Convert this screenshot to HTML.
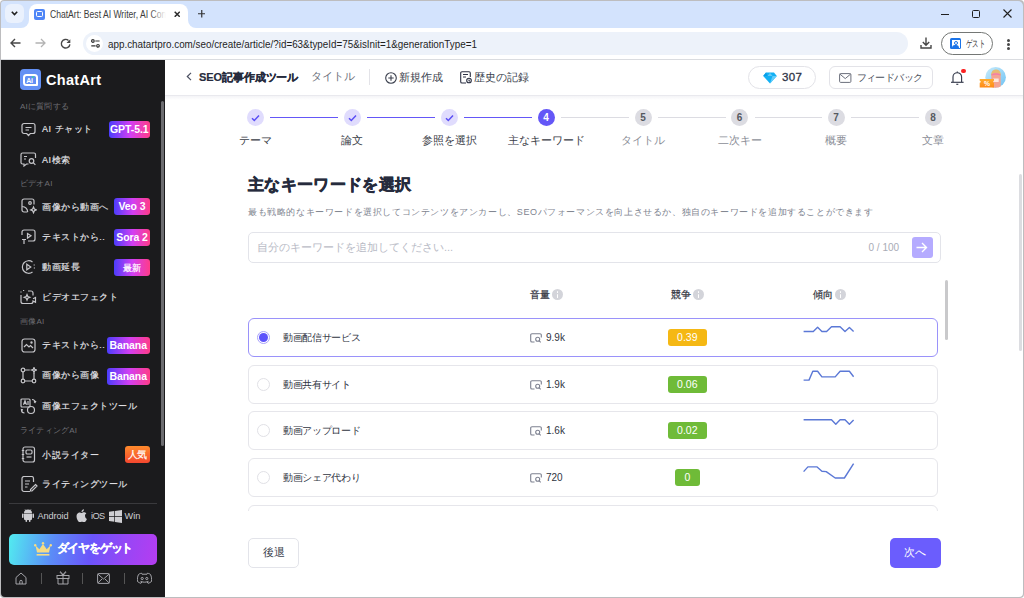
<!DOCTYPE html>
<html><head><meta charset="utf-8">
<style>
*{box-sizing:border-box;margin:0;padding:0}
html,body{width:1024px;height:598px;overflow:hidden;background:#fff;font-family:"Liberation Sans",sans-serif}
.a{position:absolute}
.t{white-space:nowrap;line-height:1}
svg{display:block}
/* browser chrome */
#win{position:absolute;left:0;top:0;width:1024px;height:598px;background:#bdbdbf;border-radius:4px}
#strip{left:1px;top:1px;width:1022px;height:27px;background:#d3e3fd;border-radius:3px 5px 0 0}
#toolbar{left:1px;top:28px;width:1022px;height:31px;background:#fff}
#tbline{left:1px;top:59px;width:1022px;height:1px;background:#dadce0}
#side{left:1px;top:60px;width:164px;height:537px;background:#1b1b1d;border-radius:0 0 0 4px}
#main{left:165px;top:60px;width:858px;height:537px;background:#fff;border-radius:0 0 4px 0}
.sl{left:20px;font-size:8px;letter-spacing:0.2px;color:#6e6e73}
.si{left:42px;font-size:9px;letter-spacing:0.55px;color:#e4e4e8;-webkit-text-stroke:0.15px #e4e4e8}
.bd{height:17px;border-radius:3px;background:linear-gradient(90deg,#4b3dfc 0%,#d23ff3 52%,#ff3c88 100%);color:#fff;font-size:10.5px;font-weight:bold;text-align:center;line-height:17px;white-space:nowrap;letter-spacing:-0.1px}
.st{width:17px;height:17px;border-radius:50%;font-size:10px;font-weight:bold;text-align:center;line-height:17px}
.lb{top:134.5px;width:120px;text-align:center;font-size:11px}
.th{font-size:10px;color:#30333d;-webkit-text-stroke:0.22px #30333d}
.info{top:289px;width:11px;height:11px;border-radius:50%;background:#d3d4da;color:transparent;font-size:1px}
.info::before{content:"";position:absolute;left:4.8px;top:2.2px;width:1.5px;height:1.5px;background:#fff;border-radius:50%}
.info::after{content:"";position:absolute;left:4.8px;top:4.6px;width:1.5px;height:4.2px;background:#fff;border-radius:1px}
.rn{font-size:10px;letter-spacing:-0.35px;color:#30343f}
.vn{font-size:10px;color:#30343f}
.cb{height:16.5px;border-radius:3px;color:#fff;font-size:10.5px;text-align:center;line-height:16.5px}
</style></head>
<body>
<div id="win"></div>
<div id="strip" class="a"></div>
<!-- tab list button -->
<!-- tab -->
<div class="a" style="left:29px;top:4px;width:159px;height:24px;background:#fff;border-radius:8px 8px 0 0"></div>
<div class="a" style="left:21px;top:20px;width:8px;height:8px;background:#fff"></div>
<div class="a" style="left:21px;top:20px;width:8px;height:8px;background:#d3e3fd;border-radius:0 0 8px 0"></div>
<div class="a" style="left:188px;top:20px;width:8px;height:8px;background:#fff"></div>
<div class="a" style="left:188px;top:20px;width:8px;height:8px;background:#d3e3fd;border-radius:0 0 0 8px"></div>
<div class="a" style="left:5px;top:4px;width:19px;height:19px;border-radius:6px;background:#eaf1fd"></div>
<svg class="a" style="left:11px;top:11px" width="7" height="5" viewBox="0 0 7 5"><path d="M.8 .8l2.700 2.700L6.200 .8" fill="none" stroke="#1f1f1f" stroke-width="1.6"/></svg>
<div class="a" style="left:34px;top:9px;width:11px;height:11px;background:#4f86f7;border-radius:2px"></div>
<div class="a" style="left:36px;top:11px;width:7px;height:6px;border:1px solid #fff;border-radius:1.5px"></div>
<div class="a" style="left:50px;top:6px;width:118px;height:18px;overflow:hidden"><div class="a t" style="left:0;top:3px;font-size:11px;color:#3c3c3c;transform:scaleX(0.78);transform-origin:0 0">ChatArt: Best AI Writer, AI Content</div></div>
<div class="a" style="left:150px;top:6px;width:20px;height:18px;background:linear-gradient(90deg,rgba(255,255,255,0),#fff 80%)"></div>
<svg class="a" style="left:173.500px;top:10.800px" width="6.500" height="6.500" viewBox="0 0 6.500 6.500"><path d="M.7 .7l5.100 5.100M5.800 .7L.7 5.800" stroke="#2a2a2a" stroke-width="1.5"/></svg>
<svg class="a" style="left:197.700px;top:10px" width="7.500" height="7.500" viewBox="0 0 7.500 7.500"><path d="M3.750 0v7.500M0 3.750h7.500" stroke="#333" stroke-width="1.2"/></svg>
<!-- window controls -->
<div class="a" style="left:941px;top:14px;width:8px;height:1px;background:#1f1f1f"></div>
<div class="a" style="left:972px;top:10px;width:8px;height:8px;border:1.2px solid #1f1f1f;border-radius:1.5px"></div>
<svg class="a" style="left:1003px;top:9px" width="9" height="9" viewBox="0 0 9 9"><path d="M0.5 0.5l8 8M8.5 0.5l-8 8" stroke="#1f1f1f" stroke-width="1.1"/></svg>

<div id="toolbar" class="a"></div>
<div id="tbline" class="a"></div>
<!-- nav -->
<svg class="a" style="left:10px;top:38px" width="11" height="10" viewBox="0 0 11 10"><path d="M10.5 5H1.2M5 1L1 5l4 4" fill="none" stroke="#474747" stroke-width="1.4"/></svg>
<svg class="a" style="left:35px;top:38px" width="11" height="10" viewBox="0 0 11 10"><path d="M0.5 5h9.3M6 1l4 4-4 4" fill="none" stroke="#b3b3b3" stroke-width="1.3"/></svg>
<svg class="a" style="left:60px;top:38px" width="12" height="12" viewBox="0 0 12 12"><path d="M9.900 6.300A4.300 4.300 0 1 1 8.500 2.500" fill="none" stroke="#474747" stroke-width="1.4"/><path d="M10.300 1.200V5H6.500z" fill="#474747"/></svg>
<!-- address bar -->
<div class="a" style="left:83px;top:32px;width:825px;height:23px;background:#edf2fa;border-radius:12px"></div>
<div class="a" style="left:86px;top:35px;width:17px;height:17px;background:#fff;border-radius:50%"></div>
<svg class="a" style="left:90.500px;top:39.300px" width="9" height="9" viewBox="0 0 9 9"><circle cx="1.900" cy="2" r="1.300" fill="none" stroke="#333" stroke-width="1.2"/><path d="M4.300 2h4.300M.3 6.800h4.300" stroke="#333" stroke-width="1.2"/><circle cx="7" cy="6.800" r="1.300" fill="none" stroke="#333" stroke-width="1.2"/></svg>
<div class="a t" style="left:108px;top:38.5px;font-size:11.2px;color:#1f1f1f;transform:scaleX(0.88);transform-origin:0 0">app.chatartpro.com<span style="color:#1f1f1f">/seo/create/article/?id=63&amp;typeId=75&amp;isInit=1&amp;generationType=1</span></div>
<!-- download -->
<svg class="a" style="left:920px;top:37px" width="12" height="12" viewBox="0 0 12 12"><path d="M6 0.5v7.5M2.8 5L6 8.2 9.2 5" fill="none" stroke="#474747" stroke-width="1.4"/><path d="M1 8v3h10V8" fill="none" stroke="#474747" stroke-width="1.4"/></svg>
<div class="a" style="left:941px;top:32px;width:52px;height:23px;border:1px solid #747775;border-radius:12px"></div>
<div class="a" style="left:950px;top:38px;width:11px;height:11px;background:#1a73e8;border-radius:1.5px"></div>
<div class="a" style="left:951.5px;top:39.5px;width:8px;height:8px;background:#fff"></div>
<div class="a" style="left:953.5px;top:40.5px;width:4px;height:4px;border:1px solid #1a73e8;border-radius:50%"></div>
<div class="a" style="left:952px;top:45px;width:7px;height:3px;background:#1a73e8;border-radius:3px 3px 0 0"></div>
<div class="a t" style="left:966px;top:38.5px;font-size:10px;color:#3c3c3c;transform:scaleX(0.64);transform-origin:0 0">ゲスト</div>
<div class="a" style="left:1006.5px;top:38.5px;width:3px;height:3px;background:#474747;border-radius:50%"></div>
<div class="a" style="left:1006.5px;top:42.5px;width:3px;height:3px;background:#474747;border-radius:50%"></div>
<div class="a" style="left:1006.5px;top:46.5px;width:3px;height:3px;background:#474747;border-radius:50%"></div>

<div id="side" class="a"></div>

<!-- SIDEBAR -->
<div class="a" style="left:20px;top:69px;width:21px;height:21px;background:#6390f4;border-radius:4px"></div>
<div class="a" style="left:22.700px;top:73.700px;width:15.300px;height:12.500px;border:2px solid #fff;border-radius:3.500px 3.500px 1px 3.500px"></div>
<div class="a t" style="left:26.300px;top:76.800px;font-size:7px;font-weight:bold;color:#fff;letter-spacing:-0.3px">Ai</div>
<div class="a" style="left:32.300px;top:76.300px;width:2px;height:2px;background:#3fd19b;border-radius:50%"></div>
<div class="a t" style="left:46px;top:73px;font-size:14.5px;font-weight:bold;color:#fff;letter-spacing:0.3px">ChatArt</div>

<div class="a t sl" style="top:102.5px">AIに質問する</div>
<div class="a t si" style="top:125px">AI チャット</div>
<div class="a bd" style="left:108.5px;top:121px;width:41.5px">GPT-5.1</div>
<div class="a t si" style="top:156px">AI検索</div>
<div class="a t sl" style="top:179.5px">ビデオAI</div>
<div class="a t si" style="top:202.5px">画像から動画へ</div>
<div class="a bd" style="left:114px;top:198px;width:36px">Veo 3</div>
<div class="a t si" style="top:232.5px">テキストから..</div>
<div class="a bd" style="left:114px;top:228.5px;width:36px">Sora 2</div>
<div class="a t si" style="top:263px">動画延長</div>
<div class="a bd" style="left:114px;top:259px;width:36px;font-size:9px;letter-spacing:0.2px;font-weight:normal;-webkit-text-stroke:0.2px #fff;line-height:18px">最新</div>
<div class="a t si" style="top:293px">ビデオエフェクト</div>
<div class="a t sl" style="top:318px">画像AI</div>
<div class="a t si" style="top:340.5px">テキストから..</div>
<div class="a bd" style="left:106.5px;top:337px;width:43.5px">Banana</div>
<div class="a t si" style="top:371px">画像から画像</div>
<div class="a bd" style="left:106.5px;top:367.5px;width:43.5px">Banana</div>
<div class="a t si" style="top:401.5px">画像エフェクトツール</div>
<div class="a t sl" style="top:427px">ライティングAI</div>
<div class="a t si" style="top:450.5px">小説ライター</div>
<div class="a bd" style="left:125px;top:446px;width:25px;background:linear-gradient(180deg,#ff8b2c,#f4472f);font-size:10px;font-weight:normal;letter-spacing:-0.3px;-webkit-text-stroke:0.2px #fff">人気</div>
<div class="a t si" style="top:479.5px">ライティングツール</div>
<div class="a" style="left:9px;top:503px;width:148px;height:1px;background:#3a3a3d"></div>

<!-- sidebar icons -->
<svg class="a" style="left:21px;top:122px" width="15" height="15" viewBox="0 0 15 15" fill="none" stroke="#c6c6ca" stroke-width="1.2"><path d="M3 1.5h9a2 2 0 0 1 2 2v6a2 2 0 0 1-2 2H9.3L7.5 13.5 5.7 11.5H3a2 2 0 0 1-2-2v-6a2 2 0 0 1 2-2z"/><path d="M4.5 5.5h6M4.5 8h3.5"/></svg>
<svg class="a" style="left:20px;top:152px" width="17" height="15" viewBox="0 0 17 15" fill="none" stroke="#c6c6ca" stroke-width="1.2"><path d="M15.5 6V2.5a1.5 1.5 0 0 0-1.5-1.5H2.5A1.5 1.5 0 0 0 1 2.5v8A1.5 1.5 0 0 0 2.5 12h1.5l0 2 2.5-2h2"/><path d="M4 4.5h3M4 7h2"/><circle cx="11.5" cy="9" r="2.3"/><path d="M13.2 10.7l2.2 2.2"/></svg>
<svg class="a" style="left:21px;top:198px" width="16" height="16" viewBox="0 0 16 16" fill="none" stroke="#c6c6ca" stroke-width="1.2"><path d="M6.5 14H3a2 2 0 0 1-2-2V3a2 2 0 0 1 2-2h8a2 2 0 0 1 2 2v3.5"/><path d="M1.2 8.5a6 6 0 0 1 5.5 5.5"/><circle cx="9" cy="5" r="1.3"/><path d="M12.5 9l.9 2 2 .9-2 .9-.9 2-.9-2-2-.9 2-.9z"/></svg>
<svg class="a" style="left:21px;top:229px" width="15" height="16" viewBox="0 0 15 16" fill="none" stroke="#c6c6ca" stroke-width="1.2"><path d="M1 6V3a2 2 0 0 1 2-2h9a2 2 0 0 1 2 2v7a2 2 0 0 1-2 2H7"/><path d="M6.5 4.5l3.5 2.3-3.5 2.3z"/><path d="M1 10.5h4M3 10.5V15"/></svg>
<svg class="a" style="left:21px;top:259px" width="15" height="16" viewBox="0 0 15 16" fill="none" stroke="#c6c6ca" stroke-width="1.2"><path d="M11.5 3A6.3 6.3 0 1 0 11.5 13"/><path d="M13.2 5.5v1M13.4 8.5v1"/><path d="M5.8 5.2l4 2.8-4 2.8z"/></svg>
<svg class="a" style="left:20px;top:289px" width="17" height="16" viewBox="0 0 17 16" fill="none" stroke="#c6c6ca" stroke-width="1.2"><path d="M1 6v6.5a2 2 0 0 0 2 2h8a2 2 0 0 0 2-2V12l2.5 1.3V8.5L13 9.8"/><path d="M13 6.5V4a2 2 0 0 0-2-2H8"/><path d="M1 3.5V2.5M3 1.5H4.2"/><path d="M7 5.5l.8 2 2 .8-2 .8-.8 2-.8-2-2-.8 2-.8z"/></svg>
<svg class="a" style="left:21px;top:338px" width="15" height="15" viewBox="0 0 15 15" fill="none" stroke="#c6c6ca" stroke-width="1.2"><rect x="1" y="1" width="13" height="13" rx="2.5"/><path d="M3 9l2.5-2.5 2.5 2.5 1.5-1.5 2.5 2.5"/><circle cx="10.5" cy="4.5" r="0.6"/></svg>
<svg class="a" style="left:20px;top:367px" width="17" height="17" viewBox="0 0 17 17" fill="none" stroke="#c6c6ca" stroke-width="1.2"><circle cx="3" cy="3" r="1.8"/><circle cx="3" cy="14" r="1.8"/><circle cx="14" cy="14" r="1.8"/><path d="M3 4.8v7.4M4.8 14h7.4M4.8 3h5M14 6v6.2"/><path d="M14 .5l.7 1.8 1.8.7-1.8.7-.7 1.8-.7-1.8-1.8-.7 1.8-.7z"/></svg>
<svg class="a" style="left:20px;top:398px" width="17" height="17" viewBox="0 0 17 17" fill="none" stroke="#c6c6ca" stroke-width="1.2"><rect x="1" y="1" width="9" height="8" rx="1"/><path d="M3.5 6.8l1.5-4 1.5 4M4 5.5h2M8 3v4"/><circle cx="11" cy="12" r="3.5"/><path d="M12 1.5a3 3 0 0 1 3 3M14 3.5l1 1 1-1.5"/><path d="M1.5 12a3 3 0 0 0 3 3M2 13l-.5-1.5 1.5 .3"/></svg>
<svg class="a" style="left:21px;top:446px" width="15" height="17" viewBox="0 0 15 17" fill="none" stroke="#c6c6ca" stroke-width="1.2"><rect x="2" y="1" width="11.5" height="15" rx="2"/><path d="M.8 4.5h2.4M.8 8.5h2.4M.8 12.5h2.4"/><rect x="5" y="4" width="6" height="4" rx="1.2"/><path d="M5.5 11h5"/></svg>
<svg class="a" style="left:21px;top:476px" width="17" height="17" viewBox="0 0 17 17" fill="none" stroke="#c6c6ca" stroke-width="1.2"><path d="M9 15.5H3a2 2 0 0 1-2-2v-11a2 2 0 0 1 2-2h7.5a2 2 0 0 1 2 2V6"/><path d="M4 5h5M4 8h4M4 11h2.5"/><path d="M14.5 8.5l1.5 1.5-5 5H9.5v-1.5z"/></svg>

<!-- platforms -->
<svg class="a" style="left:22px;top:509px" width="12" height="13" viewBox="0 0 12 13" fill="#cfcfd3"><path d="M2 4.5h8v5.5a1 1 0 0 1-1 1H3a1 1 0 0 1-1-1z"/><path d="M2 4A4 3.5 0 0 1 10 4z"/><rect x="0" y="4.5" width="1.5" height="4.5" rx=".75"/><rect x="10.5" y="4.5" width="1.5" height="4.5" rx=".75"/><rect x="3.5" y="10" width="1.6" height="3" rx=".8"/><rect x="6.9" y="10" width="1.6" height="3" rx=".8"/><path d="M3 .3l1.2 1.8M9 .3L7.8 2.1" stroke="#cfcfd3" stroke-width=".7"/></svg>
<div class="a t" style="left:37.5px;top:511.5px;font-size:9.2px;color:#cfcfd3;letter-spacing:-0.1px">Android</div>
<svg class="a" style="left:76px;top:509px" width="11" height="13" viewBox="0 0 11 13" fill="#cfcfd3"><path d="M9 6.8c0-1.5 1.2-2.2 1.3-2.3-.7-1-1.8-1.2-2.2-1.2-.9-.1-1.8.6-2.3.6s-1.2-.5-2-.5C2.700 3.400 1.700 4 1.100 5c-1.200 2-.3 5 .8 6.700.6.800 1.200 1.700 2 1.600.8 0 1.100-.5 2.100-.5s1.200.5 2.100.5c.9 0 1.400-.8 1.900-1.600.6-.9.9-1.800.9-1.800S9 9.400 9 6.800z"/><path d="M7.3 2.200c.4-.5.700-1.200.600-1.900-.6 0-1.300.4-1.800.9-.4.400-.7 1.100-.6 1.800.7.100 1.400-.3 1.800-.8z"/></svg>
<div class="a t" style="left:91px;top:511.5px;font-size:9.2px;color:#cfcfd3;letter-spacing:-0.6px">iOS</div>
<svg class="a" style="left:109px;top:509.5px" width="13" height="13" viewBox="0 0 13 13" fill="#cfcfd3"><path d="M0 1.8l5.3-.7v5H0zM6 1l7-1v6.1H6zM0 6.8h5.3v5L0 11.1zM6 6.8h7V13l-7-1z"/></svg>
<div class="a t" style="left:124.5px;top:511.5px;font-size:9.2px;color:#cfcfd3">Win</div>

<!-- get diamonds button -->
<div class="a" style="left:9px;top:534px;width:148px;height:30.5px;border-radius:5px;background:linear-gradient(100deg,#52ecf0 0%,#5b8cf7 30%,#6a55fb 55%,#9b45f5 80%,#b53df0 100%)"></div>
<svg class="a" style="left:34px;top:542px" width="18" height="14" viewBox="0 0 18 14"><path d="M1.5 3.5l3.8 3.8L9 2l3.7 5.3 3.800-3.800-1.500 7H3z" fill="#f6dc85"/><circle cx="1.2" cy="3.2" r="1.2" fill="#f6dc85"/><circle cx="9" cy="1.2" r="1.2" fill="#f6dc85"/><circle cx="16.8" cy="3.2" r="1.2" fill="#f6dc85"/><rect x="2.6" y="12" width="12.8" height="1.6" fill="#f6dc85"/></svg>
<div class="a t" style="left:56.5px;top:541.5px;font-size:12px;font-weight:bold;color:#fff;letter-spacing:-1.2px;-webkit-text-stroke:0.15px #fff">ダイヤをゲット</div>

<!-- footer icons -->
<svg class="a" style="left:15px;top:572px" width="12" height="13" viewBox="0 0 12 13" fill="none" stroke="#ababb0" stroke-width="0.95"><path d="M1 5.5L6 1l5 4.5V12H1z"/><path d="M4.8 12V9.5a1.2 1.2 0 0 1 2.4 0V12"/></svg>
<div class="a" style="left:41px;top:573px;width:1px;height:11px;background:#555"></div>
<svg class="a" style="left:56px;top:571px" width="14" height="14" viewBox="0 0 14 14" fill="none" stroke="#ababb0" stroke-width="0.95"><rect x="1" y="4.5" width="12" height="3"/><path d="M2 7.5V13h10V7.5M7 4.5V13"/><path d="M7 4.5C5.500 2 3.800 1.800 4 1s2 .5 3 3.500c1-3 2.800-4.300 3-3.500S8.500 2 7 4.500"/></svg>
<div class="a" style="left:82px;top:573px;width:1px;height:11px;background:#555"></div>
<svg class="a" style="left:97px;top:573px" width="13" height="11" viewBox="0 0 13 11" fill="none" stroke="#ababb0" stroke-width="0.95"><rect x=".6" y=".6" width="11.8" height="9.8" rx="1"/><path d="M.8 1l5.700 5 5.700-5M.8 10l4.200-4M12.200 10L8 6"/></svg>
<div class="a" style="left:124px;top:573px;width:1px;height:11px;background:#555"></div>
<svg class="a" style="left:137px;top:572px" width="15" height="12" viewBox="0 0 15 12" fill="none" stroke="#ababb0" stroke-width="0.95"><path d="M4.500 1.200C3 1.500 2 2 1.500 2.500.5 4.500.2 7 .5 9.500 1.500 10.500 3 11 4 11.300l1-1.600M10.500 1.200c1.500.3 2.500.8 3 1.300 1 2 1.300 4.500 1 7-1 1-2.500 1.500-3.500 1.800l-1-1.600"/><path d="M4.500 1.200L5 2.200h5l.5-1"/><path d="M3.500 9.300C6 10.500 9 10.500 11.500 9.300"/><circle cx="5.200" cy="6.500" r="1.100"/><circle cx="9.800" cy="6.500" r="1.100"/></svg>
<!-- sidebar scrollbar -->
<div class="a" style="left:161px;top:101px;width:3px;height:345px;background:#6c6c70;border-radius:2px"></div>

<div id="main" class="a"></div>

<!-- HEADER -->
<div class="a" style="left:165px;top:95px;width:858px;height:1px;background:#e9e9ee"></div>
<div class="a" style="left:165px;top:96px;width:858px;height:4px;background:linear-gradient(180deg,#f4f4f7,#fff)"></div>
<svg class="a" style="left:186px;top:72px" width="6" height="9" viewBox="0 0 6 9"><path d="M5 .8L1.3 4.5 5 8.2" fill="none" stroke="#4a4f60" stroke-width="1.2"/></svg>
<div class="a t" style="left:199px;top:72px;font-size:11px;font-weight:bold;color:#262b3d;letter-spacing:-0.1px;-webkit-text-stroke:0.2px #262b3d">SEO記事作成ツール</div>
<div class="a t" style="left:311px;top:70.5px;font-size:11px;color:#6b6f7b">タイトル</div>
<div class="a" style="left:368.5px;top:69px;width:1px;height:16px;background:#e3e3e8"></div>
<svg class="a" style="left:385px;top:71.500px" width="12" height="12" viewBox="0 0 12 12" fill="none" stroke="#3a3f4d" stroke-width="1.1"><circle cx="6" cy="6" r="5.300"/><path d="M6 3.300v5.400M3.300 6h5.400"/></svg>
<div class="a t" style="left:398.5px;top:71.500px;font-size:10.700px;color:#3a3f4d">新規作成</div>
<svg class="a" style="left:460px;top:71px" width="12" height="13" viewBox="0 0 12 13" fill="none" stroke="#2c3144" stroke-width="1.1"><path d="M6 12H2a1.3 1.3 0 0 1-1.300-1.300V2A1.300 1.300 0 0 1 2 .7h7A1.300 1.300 0 0 1 10.300 2v4"/><path d="M3 3.500h5M3 6h3"/><circle cx="9" cy="9.500" r="2.300"/><path d="M9 8.500v1.200l.8.5"/></svg>
<div class="a t" style="left:473.500px;top:71.500px;font-size:11px;color:#3a3f4d;letter-spacing:0.15px">歴史の記録</div>

<div class="a" style="left:748px;top:66px;width:67.5px;height:23px;border:1px solid #e3e3e8;border-radius:12px"></div>
<svg class="a" style="left:762.500px;top:71.500px" width="14" height="12" viewBox="0 0 14 12"><path d="M3 .5h8l2.800 3.500L7 11.500 .2 4z" fill="#12b0f4"/><path d="M9.500 4h4.300L7 11.500z" fill="#63cdfb"/><path d="M4.500 4L7 .8 9.500 4z" fill="#5fcaf9"/><path d="M.2 4L3 .5 4.500 4z" fill="#0a9de6"/></svg>
<div class="a t" style="left:782px;top:72px;font-size:11.5px;color:#2e3346;-webkit-text-stroke:0.3px #2e3346;letter-spacing:0.3px">307</div>
<div class="a" style="left:829px;top:66px;width:103.500px;height:23px;border:1px solid #e3e3e8;border-radius:6px"></div>
<svg class="a" style="left:839px;top:73px" width="12.500" height="10" viewBox="0 0 12.500 10" fill="none" stroke="#6b6f7b" stroke-width="1"><rect x=".6" y=".6" width="11.300" height="8.800" rx="1"/><path d="M.8 1l5.450 4.600L11.700 1"/></svg>
<div class="a t" style="left:856.500px;top:72.500px;font-size:10px;color:#4a4f5c;letter-spacing:-0.6px">フィードバック</div>
<svg class="a" style="left:950px;top:70px" width="15" height="16" viewBox="0 0 15 16" fill="none" stroke="#363b4c" stroke-width="1.15"><path d="M3 12V7a4.300 4.300 0 0 1 8.600 0v5"/><path d="M1 12.300h12.600"/><path d="M6.300 14.300h2"/><path d="M7.300 1.500v1.300"/></svg>
<div class="a" style="left:961px;top:68.8px;width:4.700px;height:4.700px;background:#fb2222;border-radius:50%"></div>
<svg class="a" style="left:979px;top:67px" width="28" height="21" viewBox="0 0 28 21">
<defs><linearGradient id="av" x1="0" y1="0" x2="1" y2="1"><stop offset="0" stop-color="#c9ecfd"/><stop offset="1" stop-color="#6fc3f3"/></linearGradient>
<linearGradient id="tk" x1="0" y1="0" x2="0" y2="1"><stop offset="0" stop-color="#ffad2e"/><stop offset="1" stop-color="#ff8a18"/></linearGradient></defs>
<circle cx="16.600" cy="10.300" r="10.300" fill="url(#av)"/>
<path d="M12.300 20V10.500C12.300 6.500 14 4.500 17 4.500S21.700 6.500 21.700 10.500V19.500C19 21 15 21 12.300 20z" fill="#f4a493"/>
<path d="M12 9C12 4.500 14 2.500 17 2.500S22 4.500 22 9L21 8C20 6 19 5.800 17 5.800S13.500 6 13 8z" fill="#e7bb73"/>
<path d="M12.500 7.300C15 6 19 6 21.500 7.300L21.400 8.600C19 7.500 15 7.500 12.600 8.600z" fill="#f27fa5"/>
<path d="M14.300 11.500h5.400v3.500h-5.400z" fill="#fde6de"/>
<path d="M.7 12h14.300v1.800a1 1 0 0 0 0 2v4.800H.7v-4.800a1 1 0 0 0 0-2z" fill="url(#tk)"/>
<text x="7.900" y="19.200" font-family="Liberation Sans" font-size="6.800" font-weight="bold" fill="#fff" text-anchor="middle">%</text>
</svg>

<!-- <div class="a" style="left:270px;top:116.5px;width:68px;height:1.6px;background:#6457f7"></div>
<div class="a" style="left:367px;top:116.5px;width:68px;height:1.6px;background:#6457f7"></div>
<div class="a" style="left:464px;top:116.5px;width:68px;height:1.6px;background:#6457f7"></div>
<div class="a" style="left:561px;top:116.5px;width:68px;height:1.6px;background:#dcdce2"></div>
<div class="a" style="left:658px;top:116.5px;width:67.5px;height:1.6px;background:#dcdce2"></div>
<div class="a" style="left:754.5px;top:116.5px;width:67.5px;height:1.6px;background:#dcdce2"></div>
<div class="a" style="left:851px;top:116.5px;width:68px;height:1.6px;background:#dcdce2"></div>
<div class="a" style="left:246.5px;top:109px;width:17px;height:17px;border-radius:50%;background:#e0dcfd"></div>
<svg class="a" style="left:250.5px;top:113.5px" width="9" height="8" viewBox="0 0 9 8"><path d="M1 4.200l2.300 2.300L8 1.500" fill="none" stroke="#5a4ef5" stroke-width="1.5"/></svg>
<div class="a" style="left:343.5px;top:109px;width:17px;height:17px;border-radius:50%;background:#e0dcfd"></div>
<svg class="a" style="left:347.5px;top:113.5px" width="9" height="8" viewBox="0 0 9 8"><path d="M1 4.200l2.300 2.300L8 1.500" fill="none" stroke="#5a4ef5" stroke-width="1.5"/></svg>
<div class="a" style="left:440.5px;top:109px;width:17px;height:17px;border-radius:50%;background:#e0dcfd"></div>
<svg class="a" style="left:444.5px;top:113.5px" width="9" height="8" viewBox="0 0 9 8"><path d="M1 4.200l2.300 2.300L8 1.500" fill="none" stroke="#5a4ef5" stroke-width="1.5"/></svg>
<div class="a st" style="left:537.5px;top:109px;background:#6457f7;color:#fff">4</div>
<div class="a st" style="left:634.5px;top:109px;background:#dcdce2;color:#55585f">5</div>
<div class="a st" style="left:731.0px;top:109px;background:#dcdce2;color:#55585f">6</div>
<div class="a st" style="left:827.5px;top:109px;background:#dcdce2;color:#55585f">7</div>
<div class="a st" style="left:924.5px;top:109px;background:#dcdce2;color:#55585f">8</div>
<div class="a t lb" style="left:195px;color:#3a3d47">テーマ</div>
<div class="a t lb" style="left:292px;color:#3a3d47">論文</div>
<div class="a t lb" style="left:389px;color:#3a3d47">参照を選択</div>
<div class="a t lb" style="left:486px;color:#3a3d47">主なキーワード</div>
<div class="a t lb" style="left:583px;color:#8b8e97">タイトル</div>
<div class="a t lb" style="left:679.5px;color:#8b8e97">二次キー</div>
<div class="a t lb" style="left:776px;color:#8b8e97">概要</div>
<div class="a t lb" style="left:873px;color:#8b8e97">文章</div>
 -->
<div class="a" style="left:270px;top:116.5px;width:68px;height:1.6px;background:#6457f7"></div>
<div class="a" style="left:367px;top:116.5px;width:68px;height:1.6px;background:#6457f7"></div>
<div class="a" style="left:464px;top:116.5px;width:68px;height:1.6px;background:#6457f7"></div>
<div class="a" style="left:561px;top:116.5px;width:68px;height:1.6px;background:#dcdce2"></div>
<div class="a" style="left:658px;top:116.5px;width:67.5px;height:1.6px;background:#dcdce2"></div>
<div class="a" style="left:754.5px;top:116.5px;width:67.5px;height:1.6px;background:#dcdce2"></div>
<div class="a" style="left:851px;top:116.5px;width:68px;height:1.6px;background:#dcdce2"></div>
<div class="a" style="left:246.5px;top:109px;width:17px;height:17px;border-radius:50%;background:#e0dcfd"></div>
<svg class="a" style="left:250.5px;top:113.5px" width="9" height="8" viewBox="0 0 9 8"><path d="M1 4.200l2.300 2.300L8 1.500" fill="none" stroke="#5a4ef5" stroke-width="1.5"/></svg>
<div class="a" style="left:343.5px;top:109px;width:17px;height:17px;border-radius:50%;background:#e0dcfd"></div>
<svg class="a" style="left:347.5px;top:113.5px" width="9" height="8" viewBox="0 0 9 8"><path d="M1 4.200l2.300 2.300L8 1.500" fill="none" stroke="#5a4ef5" stroke-width="1.5"/></svg>
<div class="a" style="left:440.5px;top:109px;width:17px;height:17px;border-radius:50%;background:#e0dcfd"></div>
<svg class="a" style="left:444.5px;top:113.5px" width="9" height="8" viewBox="0 0 9 8"><path d="M1 4.200l2.300 2.300L8 1.500" fill="none" stroke="#5a4ef5" stroke-width="1.5"/></svg>
<div class="a st" style="left:537.5px;top:109px;background:#6457f7;color:#fff">4</div>
<div class="a st" style="left:634.5px;top:109px;background:#dcdce2;color:#55585f">5</div>
<div class="a st" style="left:731.0px;top:109px;background:#dcdce2;color:#55585f">6</div>
<div class="a st" style="left:827.5px;top:109px;background:#dcdce2;color:#55585f">7</div>
<div class="a st" style="left:924.5px;top:109px;background:#dcdce2;color:#55585f">8</div>
<div class="a t lb" style="left:195px;color:#3a3d47">テーマ</div>
<div class="a t lb" style="left:292px;color:#3a3d47">論文</div>
<div class="a t lb" style="left:389px;color:#3a3d47">参照を選択</div>
<div class="a t lb" style="left:486px;color:#3a3d47">主なキーワード</div>
<div class="a t lb" style="left:583px;color:#8b8e97">タイトル</div>
<div class="a t lb" style="left:679.5px;color:#8b8e97">二次キー</div>
<div class="a t lb" style="left:776px;color:#8b8e97">概要</div>
<div class="a t lb" style="left:873px;color:#8b8e97">文章</div>


<!-- HEADING -->
<div class="a t" style="left:248px;top:177px;font-size:16px;font-weight:bold;color:#262b3d;letter-spacing:0.35px;-webkit-text-stroke:0.6px #262b3d">主なキーワードを選択</div>
<div class="a t" style="left:248px;top:207.5px;font-size:9px;letter-spacing:0.6px;color:#80848f">最も戦略的なキーワードを選択してコンテンツをアンカーし、SEOパフォーマンスを向上させるか、独自のキーワードを追加することができます</div>
<!-- input -->
<div class="a" style="left:248px;top:232px;width:693px;height:31px;border:1px solid #e3e4ea;border-radius:5px"></div>
<div class="a t" style="left:257px;top:242px;font-size:11px;color:#b9bbc6">自分のキーワードを追加してください...</div>
<div class="a t" style="left:868.5px;top:242.5px;font-size:10px;color:#a9acb6">0 / 100</div>
<div class="a" style="left:912px;top:237px;width:20.5px;height:20.5px;background:#b5abff;border-radius:3px"></div>
<svg class="a" style="left:916px;top:241.5px" width="12" height="11" viewBox="0 0 12 11" fill="none" stroke="#fff" stroke-width="1.4"><path d="M.5 5.500h10M6 1l4.500 4.500L6 10"/></svg>

<!-- TABLE HEADER -->
<div class="a t th" style="left:529.5px;top:290px">音量</div>
<div class="a info" style="left:552px;top:289px"></div>
<div class="a t th" style="left:671px;top:290px">競争</div>
<div class="a info" style="left:693px;top:289px"></div>
<div class="a t th" style="left:812.5px;top:290px">傾向</div>
<div class="a info" style="left:835px;top:289px"></div>

<!-- <div class="a" style="left:83px;top:46px;width:690px;height:38.5px;border:1px solid #9a92fa;border-radius:6px"></div>
<div class="a" style="left:92px;top:58.5px;width:13px;height:13px;border-radius:50%;border:1.3px solid #aaa3fc;background:#fff"></div>
<div class="a" style="left:94px;top:60.5px;width:9px;height:9px;border-radius:50%;background:#5d53fb"></div>
<div class="a t rn" style="left:118px;top:61.0px">動画配信サービス</div>
<svg class="a" style="left:364.5px;top:61px" width="12" height="10" viewBox="0 0 12 10" fill="none" stroke="#7d8190" stroke-width="1.1"><path d="M4.500 9H2A1.300 1.300 0 0 1 .7 7.700V2A1.300 1.300 0 0 1 2 .7h8A1.300 1.300 0 0 1 11.300 2v2.500"/><circle cx="7.700" cy="6.300" r="2"/><path d="M9.200 7.800l1.500 1.500"/></svg>
<div class="a t vn" style="left:381px;top:60.5px">9.9k</div>
<div class="a cb" style="left:502.79999999999995px;top:57px;width:39px;background:#f5b814">0.39</div>
<svg class="a" style="left:0;top:0" width="858" height="239"><path d="M638.6 59.5 L648.3 59.5 L652.6 55.2 L656.9 59.5 L661.6 59.5 L666.5 54.8 L675.1 54.8 L680.0 59.5 L684.4 55.5 L688.6 59.5" fill="none" stroke="#5b78d6" stroke-width="1.4" stroke-linejoin="round"/></svg>
<div class="a" style="left:83px;top:93px;width:690px;height:38.5px;border:1px solid #e6e6eb;border-radius:6px"></div>
<div class="a" style="left:92px;top:105.5px;width:13px;height:13px;border-radius:50%;border:1px solid #e1e1e6;background:#fff"></div>
<div class="a t rn" style="left:118px;top:108.0px">動画共有サイト</div>
<svg class="a" style="left:364.5px;top:108px" width="12" height="10" viewBox="0 0 12 10" fill="none" stroke="#7d8190" stroke-width="1.1"><path d="M4.500 9H2A1.300 1.300 0 0 1 .7 7.700V2A1.300 1.300 0 0 1 2 .7h8A1.300 1.300 0 0 1 11.300 2v2.500"/><circle cx="7.700" cy="6.300" r="2"/><path d="M9.200 7.800l1.500 1.500"/></svg>
<div class="a t vn" style="left:381px;top:107.5px">1.9k</div>
<div class="a cb" style="left:502.79999999999995px;top:104px;width:39px;background:#6fbb38">0.06</div>
<svg class="a" style="left:0;top:0" width="858" height="239"><path d="M638.6 108.1 L644.0 108.1 L647.8 99.3 L652.6 99.3 L656.9 104.9 L670.2 104.9 L675.1 99.3 L684.4 99.3 L688.6 104.7" fill="none" stroke="#5b78d6" stroke-width="1.4" stroke-linejoin="round"/></svg>
<div class="a" style="left:83px;top:140px;width:690px;height:38.5px;border:1px solid #e6e6eb;border-radius:6px"></div>
<div class="a" style="left:92px;top:152.5px;width:13px;height:13px;border-radius:50%;border:1px solid #e1e1e6;background:#fff"></div>
<div class="a t rn" style="left:118px;top:155.0px">動画アップロード</div>
<svg class="a" style="left:364.5px;top:155px" width="12" height="10" viewBox="0 0 12 10" fill="none" stroke="#7d8190" stroke-width="1.1"><path d="M4.500 9H2A1.300 1.300 0 0 1 .7 7.700V2A1.300 1.300 0 0 1 2 .7h8A1.300 1.300 0 0 1 11.300 2v2.500"/><circle cx="7.700" cy="6.300" r="2"/><path d="M9.200 7.800l1.500 1.500"/></svg>
<div class="a t vn" style="left:381px;top:154.5px">1.6k</div>
<div class="a cb" style="left:502.79999999999995px;top:151px;width:39px;background:#6fbb38">0.02</div>
<svg class="a" style="left:0;top:0" width="858" height="239"><path d="M638.6 147.8 L666.5 147.8 L670.8 152.3 L675.1 147.8 L680.0 147.8 L684.4 152.3 L688.6 148.0" fill="none" stroke="#5b78d6" stroke-width="1.4" stroke-linejoin="round"/></svg>
<div class="a" style="left:83px;top:187px;width:690px;height:38.5px;border:1px solid #e6e6eb;border-radius:6px"></div>
<div class="a" style="left:92px;top:199.5px;width:13px;height:13px;border-radius:50%;border:1px solid #e1e1e6;background:#fff"></div>
<div class="a t rn" style="left:118px;top:202.0px">動画シェア代わり</div>
<svg class="a" style="left:364.5px;top:202px" width="12" height="10" viewBox="0 0 12 10" fill="none" stroke="#7d8190" stroke-width="1.1"><path d="M4.500 9H2A1.300 1.300 0 0 1 .7 7.700V2A1.300 1.300 0 0 1 2 .7h8A1.300 1.300 0 0 1 11.300 2v2.500"/><circle cx="7.700" cy="6.300" r="2"/><path d="M9.200 7.800l1.500 1.500"/></svg>
<div class="a t vn" style="left:381px;top:201.5px">720</div>
<div class="a cb" style="left:509.54999999999995px;top:198px;width:25.5px;background:#6fbb38">0</div>
<svg class="a" style="left:0;top:0" width="858" height="239"><path d="M638.6 199.6 L642.9 194.9 L652.1 194.9 L656.9 199.2 L661.2 199.6 L670.2 206.0 L679.4 206.0 L688.6 191.6" fill="none" stroke="#5b78d6" stroke-width="1.4" stroke-linejoin="round"/></svg>
<div class="a" style="left:83px;top:234px;width:690px;height:38.5px;border:1px solid #e6e6eb;border-radius:6px"></div>
 -->
<div class="a" style="left:165px;top:272px;width:858px;height:239px;overflow:hidden">
<div class="a" style="left:83px;top:46px;width:690px;height:38.5px;border:1px solid #9a92fa;border-radius:6px"></div>
<div class="a" style="left:92px;top:58.5px;width:13px;height:13px;border-radius:50%;border:1.3px solid #aaa3fc;background:#fff"></div>
<div class="a" style="left:94px;top:60.5px;width:9px;height:9px;border-radius:50%;background:#5d53fb"></div>
<div class="a t rn" style="left:118px;top:61.0px">動画配信サービス</div>
<svg class="a" style="left:364.5px;top:61px" width="12" height="10" viewBox="0 0 12 10" fill="none" stroke="#7d8190" stroke-width="1.1"><path d="M4.500 9H2A1.300 1.300 0 0 1 .7 7.700V2A1.300 1.300 0 0 1 2 .7h8A1.300 1.300 0 0 1 11.300 2v2.500"/><circle cx="7.700" cy="6.300" r="2"/><path d="M9.200 7.800l1.500 1.500"/></svg>
<div class="a t vn" style="left:381px;top:60.5px">9.9k</div>
<div class="a cb" style="left:502.79999999999995px;top:57px;width:39px;background:#f5b814">0.39</div>
<svg class="a" style="left:0;top:0" width="858" height="239"><path d="M638.6 59.5 L648.3 59.5 L652.6 55.2 L656.9 59.5 L661.6 59.5 L666.5 54.8 L675.1 54.8 L680.0 59.5 L684.4 55.5 L688.6 59.5" fill="none" stroke="#5b78d6" stroke-width="1.4" stroke-linejoin="round"/></svg>
<div class="a" style="left:83px;top:93px;width:690px;height:38.5px;border:1px solid #e6e6eb;border-radius:6px"></div>
<div class="a" style="left:92px;top:105.5px;width:13px;height:13px;border-radius:50%;border:1px solid #e1e1e6;background:#fff"></div>
<div class="a t rn" style="left:118px;top:108.0px">動画共有サイト</div>
<svg class="a" style="left:364.5px;top:108px" width="12" height="10" viewBox="0 0 12 10" fill="none" stroke="#7d8190" stroke-width="1.1"><path d="M4.500 9H2A1.300 1.300 0 0 1 .7 7.700V2A1.300 1.300 0 0 1 2 .7h8A1.300 1.300 0 0 1 11.300 2v2.500"/><circle cx="7.700" cy="6.300" r="2"/><path d="M9.200 7.800l1.500 1.500"/></svg>
<div class="a t vn" style="left:381px;top:107.5px">1.9k</div>
<div class="a cb" style="left:502.79999999999995px;top:104px;width:39px;background:#6fbb38">0.06</div>
<svg class="a" style="left:0;top:0" width="858" height="239"><path d="M638.6 108.1 L644.0 108.1 L647.8 99.3 L652.6 99.3 L656.9 104.9 L670.2 104.9 L675.1 99.3 L684.4 99.3 L688.6 104.7" fill="none" stroke="#5b78d6" stroke-width="1.4" stroke-linejoin="round"/></svg>
<div class="a" style="left:83px;top:139px;width:690px;height:38.5px;border:1px solid #e6e6eb;border-radius:6px"></div>
<div class="a" style="left:92px;top:151.5px;width:13px;height:13px;border-radius:50%;border:1px solid #e1e1e6;background:#fff"></div>
<div class="a t rn" style="left:118px;top:154px">動画アップロード</div>
<svg class="a" style="left:364.5px;top:154px" width="12" height="10" viewBox="0 0 12 10" fill="none" stroke="#7d8190" stroke-width="1.1"><path d="M4.500 9H2A1.300 1.300 0 0 1 .7 7.700V2A1.300 1.300 0 0 1 2 .7h8A1.300 1.300 0 0 1 11.300 2v2.500"/><circle cx="7.700" cy="6.300" r="2"/><path d="M9.200 7.800l1.500 1.500"/></svg>
<div class="a t vn" style="left:381px;top:153.5px">1.6k</div>
<div class="a cb" style="left:502.79999999999995px;top:150px;width:39px;background:#6fbb38">0.02</div>
<svg class="a" style="left:0;top:0" width="858" height="239"><path d="M638.6 147.8 L666.5 147.8 L670.8 152.3 L675.1 147.8 L680.0 147.8 L684.4 152.3 L688.6 148.0" fill="none" stroke="#5b78d6" stroke-width="1.4" stroke-linejoin="round"/></svg>
<div class="a" style="left:83px;top:186px;width:690px;height:38.5px;border:1px solid #e6e6eb;border-radius:6px"></div>
<div class="a" style="left:92px;top:198.5px;width:13px;height:13px;border-radius:50%;border:1px solid #e1e1e6;background:#fff"></div>
<div class="a t rn" style="left:118px;top:201px">動画シェア代わり</div>
<svg class="a" style="left:364.5px;top:201px" width="12" height="10" viewBox="0 0 12 10" fill="none" stroke="#7d8190" stroke-width="1.1"><path d="M4.500 9H2A1.300 1.300 0 0 1 .7 7.700V2A1.300 1.300 0 0 1 2 .7h8A1.300 1.300 0 0 1 11.300 2v2.500"/><circle cx="7.700" cy="6.300" r="2"/><path d="M9.200 7.800l1.500 1.500"/></svg>
<div class="a t vn" style="left:381px;top:200.5px">720</div>
<div class="a cb" style="left:509.54999999999995px;top:197px;width:25.5px;background:#6fbb38">0</div>
<svg class="a" style="left:0;top:0" width="858" height="239"><path d="M638.6 199.6 L642.9 194.9 L652.1 194.9 L656.9 199.2 L661.2 199.6 L670.2 206.0 L679.4 206.0 L688.6 191.6" fill="none" stroke="#5b78d6" stroke-width="1.4" stroke-linejoin="round"/></svg>
<div class="a" style="left:83px;top:233px;width:690px;height:38.5px;border:1px solid #e6e6eb;border-radius:6px"></div>

</div>
<div class="a" style="left:945px;top:280px;width:3px;height:60px;background:#c9c9cb;border-radius:2px"></div>

<div class="a" style="left:1019px;top:174px;width:3px;height:177px;background:#dcdde1;border-radius:2px"></div>
<!-- BOTTOM BUTTONS -->
<div class="a" style="left:248px;top:538px;width:51px;height:30px;border:1px solid #e3e4ea;border-radius:5px"></div>
<div class="a t" style="left:263px;top:547px;font-size:11px;color:#3a3f4d">後退</div>
<div class="a" style="left:890px;top:538px;width:51px;height:30px;background:#6b5dfd;border-radius:5px"></div>
<div class="a t" style="left:904px;top:547px;font-size:11px;color:#fff">次へ</div>

</body></html>
